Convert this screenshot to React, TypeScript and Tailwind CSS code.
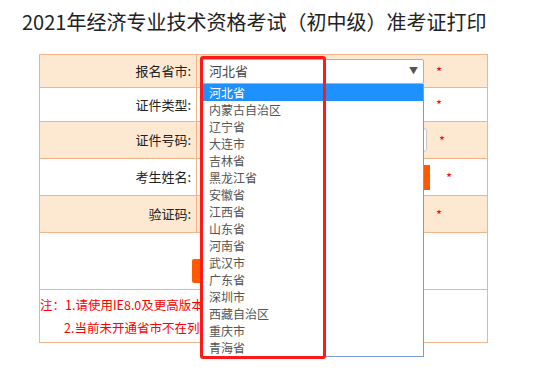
import React from "react";

const provinces = [
  "河北省",
  "内蒙古自治区",
  "辽宁省",
  "大连市",
  "吉林省",
  "黑龙江省",
  "安徽省",
  "江西省",
  "山东省",
  "河南省",
  "武汉市",
  "广东省",
  "深圳市",
  "西藏自治区",
  "重庆市",
  "青海省",
];

const Star = () => <span className="text-[#ff0000] text-[13px] leading-none">*</span>;

export default function App() {
  return (
    <div
      className="relative w-[549px] h-[370px] bg-white overflow-hidden text-[#222]"
      style={{ fontFamily: '"Noto Sans CJK SC", "Noto Sans", sans-serif' }}
    >
      <h1 className="h-[54px] pl-[22px] pt-[9px] text-[20px] leading-[26px] font-normal text-[#222]">
        2021年经济专业技术资格考试（初中级）准考证打印
      </h1>

      <table className="ml-[39px] w-[449px] border-collapse text-[13px]">
        <tbody>
          <tr className="h-[33px] bg-[#fde9d2]">
            <td className="w-[157px] border border-[#f1b48b] pr-[5px] text-right">报名省市:</td>
            <td className="border border-[#f1b48b] pl-[5px]">
              <div className="flex items-center gap-[12px]">
                <div className="relative">
                  <div className="flex h-[25px] w-[222px] items-center justify-between rounded-[2px] border border-[#f2a33a] bg-white pl-[6px] pr-[5px] text-[13px] text-[#444]">
                    <span>河北省</span>
                    <span className="text-[9px] text-[#555]">▼</span>
                  </div>
                  {/* open option list */}
                  <ul className="absolute left-0 top-[25px] z-10 w-[222px] border border-t-0 border-[#7a9cd6] bg-white text-[12px] leading-[17px] text-[#555]">
                    {provinces.map((p, i) => (
                      <li
                        key={p}
                        className={
                          i === 0
                            ? "h-[17px] bg-[#1e90ff] pl-[6px] text-white"
                            : "h-[17px] pl-[6px]"
                        }
                      >
                        {p}
                      </li>
                    ))}
                  </ul>
                </div>
                <Star />
              </div>
            </td>
          </tr>
          <tr className="h-[34px] bg-white">
            <td className="border border-[#f1b48b] pr-[5px] text-right">证件类型:</td>
            <td className="border border-[#f1b48b] pl-[5px]">
              <div className="flex items-center gap-[12px]">
                <div className="h-[22px] w-[222px] rounded-[2px] border border-[#ccc]" />
                <Star />
              </div>
            </td>
          </tr>
          <tr className="h-[37px] bg-[#fde9d2]">
            <td className="border border-[#f1b48b] pr-[5px] text-right">证件号码:</td>
            <td className="border border-[#f1b48b] pl-[5px]">
              <div className="flex items-center gap-[12px]">
                <div className="h-[24px] w-[225px] rounded-[3px] border border-[#c8c8c8] bg-white" />
                <Star />
              </div>
            </td>
          </tr>
          <tr className="h-[37px] bg-white">
            <td className="border border-[#f1b48b] pr-[5px] text-right">考生姓名:</td>
            <td className="border border-[#f1b48b] pl-[5px]">
              <div className="flex items-center gap-[16px]">
                <div className="h-[25px] w-[228px] bg-[#ff5a00]" />
                <Star />
              </div>
            </td>
          </tr>
          <tr className="h-[37px] bg-[#fde9d2]">
            <td className="border border-[#f1b48b] pr-[5px] text-right">验证码:</td>
            <td className="border border-[#f1b48b] pl-[5px]">
              <div className="flex items-center gap-[12px]">
                <div className="h-[24px] w-[222px] bg-white" />
                <Star />
              </div>
            </td>
          </tr>
          <tr className="h-[57px] bg-white">
            <td colSpan={2} className="border border-[#f1b48b] align-top">
              <div className="flex justify-center pt-[26px]">
                <div className="h-[24px] w-[144px] rounded-[2px] bg-[#ff5a00]" />
              </div>
            </td>
          </tr>
          <tr className="h-[53px] bg-white">
            <td colSpan={2} className="border border-[#f1b48b] text-[12.5px] leading-[23px] text-[#ff0000]">
              <div>注：1.请使用IE8.0及更高版本浏览器进行打印</div>
              <div className="pl-[24px]">2.当前未开通省市不在列表中显示</div>
            </td>
          </tr>
        </tbody>
      </table>

      {/* red highlight frame drawn over the page */}
      <div className="pointer-events-none absolute left-[200px] top-[56px] z-20 h-[303px] w-[126px] rounded-[3px] border-[3px] border-[#ff1a1a]" />
    </div>
  );
}
